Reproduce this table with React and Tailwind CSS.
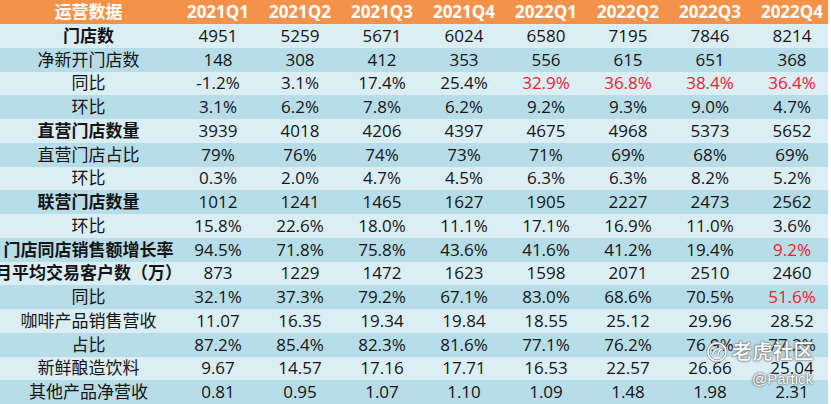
import React from 'react';

const cols = ['2021Q1', '2021Q2', '2021Q3', '2021Q4', '2022Q1', '2022Q2', '2022Q3', '2022Q4'];

// r: indices of values shown in red
const rows = [
  { label: '门店数', bold: true, v: ['4951', '5259', '5671', '6024', '6580', '7195', '7846', '8214'] },
  { label: '净新开门店数', v: ['148', '308', '412', '353', '556', '615', '651', '368'] },
  { label: '同比', v: ['-1.2%', '3.1%', '17.4%', '25.4%', '32.9%', '36.8%', '38.4%', '36.4%'], r: [4, 5, 6, 7] },
  { label: '环比', v: ['3.1%', '6.2%', '7.8%', '6.2%', '9.2%', '9.3%', '9.0%', '4.7%'] },
  { label: '直营门店数量', bold: true, v: ['3939', '4018', '4206', '4397', '4675', '4968', '5373', '5652'] },
  { label: '直营门店占比', v: ['79%', '76%', '74%', '73%', '71%', '69%', '68%', '69%'] },
  { label: '环比', v: ['0.3%', '2.0%', '4.7%', '4.5%', '6.3%', '6.3%', '8.2%', '5.2%'] },
  { label: '联营门店数量', bold: true, v: ['1012', '1241', '1465', '1627', '1905', '2227', '2473', '2562'] },
  { label: '环比', v: ['15.8%', '22.6%', '18.0%', '11.1%', '17.1%', '16.9%', '11.0%', '3.6%'] },
  { label: '门店同店销售额增长率', bold: true, v: ['94.5%', '71.8%', '75.8%', '43.6%', '41.6%', '41.2%', '19.4%', '9.2%'], r: [7] },
  { label: '月平均交易客户数（万）', bold: true, v: ['873', '1229', '1472', '1623', '1598', '2071', '2510', '2460'] },
  { label: '同比', v: ['32.1%', '37.3%', '79.2%', '67.1%', '83.0%', '68.6%', '70.5%', '51.6%'], r: [7] },
  { label: '咖啡产品销售营收', v: ['11.07', '16.35', '19.34', '19.84', '18.55', '25.12', '29.96', '28.52'] },
  { label: '占比', v: ['87.2%', '85.4%', '82.3%', '81.6%', '77.1%', '76.2%', '76.9%', '77.2%'] },
  { label: '新鲜酿造饮料', v: ['9.67', '14.57', '17.16', '17.71', '16.53', '22.57', '26.66', '25.04'] },
  { label: '其他产品净营收', v: ['0.81', '0.95', '1.07', '1.10', '1.09', '1.48', '1.98', '2.31'] },
];

// watermark sits over the last rows
const Watermark = () => (
  <div className="pointer-events-none absolute left-[694px] top-[340px] flex w-[120px] flex-col items-end text-white [text-shadow:0_0_1px_#555,0_0_2px_#777,0_0_3px_#999]">
    <div className="flex items-center gap-[4px]">
      <svg width="22" height="22" viewBox="0 0 22 22">
        <circle cx="11" cy="11" r="9" fill="none" stroke="#8c8c8c" strokeWidth="3" />
        <circle cx="11" cy="11" r="9" fill="none" stroke="#ffffff" strokeWidth="1.6" />
        <path d="M6.5 13.5c1-4.5 4.5-6.5 9-5.2-2.4 1-3.4 3-3.4 6.2" fill="none" stroke="#8c8c8c" strokeWidth="2.8" />
        <path d="M6.5 13.5c1-4.5 4.5-6.5 9-5.2-2.4 1-3.4 3-3.4 6.2" fill="none" stroke="#ffffff" strokeWidth="1.4" />
      </svg>
      <span className="text-[20px] leading-[24px] tracking-[0.5px] font-medium">老虎社区</span>
    </div>
    <span className="mt-[6px] mr-[1px] font-['Liberation_Sans',sans-serif] text-[15px] leading-[18px]">@Partick</span>
  </div>
);

export default function App() {
  return (
    <div className="relative h-[404px] w-[831px] overflow-hidden bg-white font-['Open_Sans','Noto_Sans_CJK_SC',sans-serif] text-[17px] text-[#141414]">
      <div className="w-[828px] overflow-hidden">
        <div className="flex h-[24px] w-[833px] items-center bg-[#f5924a] font-bold text-white">
          <div className="w-[177px] shrink-0 text-center leading-[24px]">运营数据</div>
          {cols.map((c) => (
            <div key={c} className="w-[82px] shrink-0 text-center leading-[24px]">{c}</div>
          ))}
        </div>
        {rows.map((row, i) => (
          <div
            key={i}
            className={`flex h-[23.75px] w-[833px] items-center ${i % 2 === 0 ? 'bg-[#dbeef4]' : 'bg-[#b7dde8]'}`}
          >
            <div className={`flex w-[177px] shrink-0 justify-center whitespace-nowrap leading-[24px] ${row.bold ? 'font-bold' : ''}`}>
              <span className="whitespace-nowrap">{row.label}</span>
            </div>
            {row.v.map((val, j) => (
              <div
                key={j}
                className={`w-[82px] shrink-0 text-center leading-[24px] ${row.r && row.r.includes(j) ? 'text-[#f0202a]' : ''}`}
              >
                {val}
              </div>
            ))}
          </div>
        ))}
      </div>
      <Watermark />
    </div>
  );
}
